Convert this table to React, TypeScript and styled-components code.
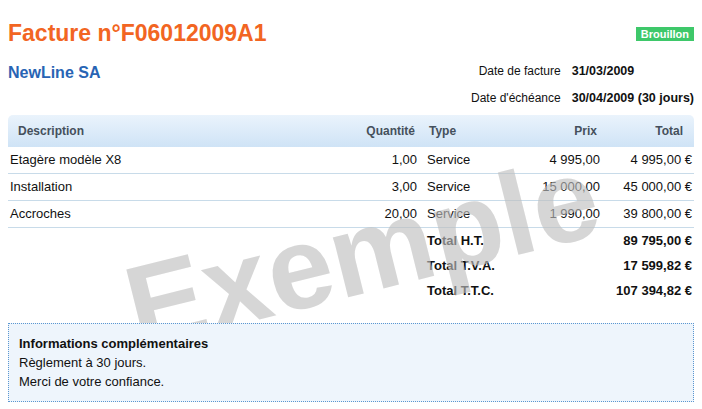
import React from "react";
import styled, { createGlobalStyle } from "styled-components";

const GlobalStyle = createGlobalStyle`
  html, body {
    margin: 0;
    padding: 0;
    background: #ffffff;
  }
  body {
    font-family: "Liberation Sans", Arial, sans-serif;
    font-size: 12px;
    color: #111111;
  }
`;

const Page = styled.div`
  position: relative;
  width: 702px;
  height: 409px;
  box-sizing: border-box;
  padding: 0 8px;
  overflow: hidden;
`;

const TopRow = styled.div`
  display: flex;
  justify-content: space-between;
  align-items: flex-start;
`;

const Title = styled.h1`
  margin: 19px 0 0 0;
  font-size: 23px;
  line-height: 28px;
  font-weight: bold;
  color: #f26522;
`;

const Badge = styled.span`
  margin-top: 27px;
  background: #3ec86a;
  color: #ffffff;
  font-weight: bold;
  font-size: 11px;
  line-height: 14px;
  padding: 0 5px;
`;

const InfoRow = styled.div`
  display: flex;
  justify-content: space-between;
  align-items: flex-start;
`;

const Client = styled.div`
  margin-top: 16px;
  font-size: 16px;
  line-height: 20px;
  font-weight: bold;
  color: #2864b4;
`;

const Dates = styled.div`
  display: grid;
  grid-template-columns: auto auto;
  column-gap: 11px;
  margin-top: 11px;
  line-height: 27px;
`;

const DateLabel = styled.div`
  text-align: right;
`;

const DateValue = styled.div`
  font-weight: bold;
  font-size: 12.5px;
`;

const Table = styled.div`
  margin-top: 3px;
`;

const cols = "347px 70px 95px 80px 94px";

const HeadRow = styled.div`
  display: grid;
  grid-template-columns: ${cols};
  height: 32px;
  line-height: 32px;
  border-radius: 5px 5px 0 0;
  background: linear-gradient(#eaf3fc, #cfe3f6);
  font-weight: bold;
  color: #45505c;
`;

const BodyRow = styled.div`
  display: grid;
  grid-template-columns: ${cols};
  height: 26px;
  line-height: 26px;
  font-size: 13px;
  border-bottom: 1px solid #c8dbe9;
`;

const TotalRow = styled.div`
  display: grid;
  grid-template-columns: ${cols};
  height: 25px;
  line-height: 25px;
  font-size: 13px;
  font-weight: bold;
`;

const Cell = styled.div<{ $align?: "left" | "right"; $pl?: number; $pr?: number; $span?: string }>`
  text-align: ${(p) => p.$align ?? "left"};
  padding-left: ${(p) => p.$pl ?? 0}px;
  padding-right: ${(p) => p.$pr ?? 0}px;
  white-space: nowrap;
  ${(p) => (p.$span ? `grid-column: ${p.$span};` : "")}
`;

const Notes = styled.div`
  position: relative;
  z-index: 2;
  margin-top: 20px;
  background: #eef5fc;
  border: 1px dotted #5b97d1;
  padding: 10px 10px 10px 10px;
  font-size: 13px;
  line-height: 19px;
  color: #111111;
`;

const NotesTitle = styled.div`
  font-weight: bold;
`;

const Watermark = styled.div`
  position: absolute;
  left: 362px;
  top: 252px;
  z-index: 1;
  transform: translate(-50%, -50%) rotate(-14deg);
  font-size: 117px;
  line-height: 1;
  font-weight: bold;
  color: rgba(190, 190, 190, 0.63);
  pointer-events: none;
  white-space: nowrap;
`;

type Line = { desc: string; qty: string; type: string; price: string; total: string };

const lines: Line[] = [
  { desc: "Etagère modèle X8", qty: "1,00", type: "Service", price: "4 995,00", total: "4 995,00 €" },
  { desc: "Installation", qty: "3,00", type: "Service", price: "15 000,00", total: "45 000,00 €" },
  { desc: "Accroches", qty: "20,00", type: "Service", price: "1 990,00", total: "39 800,00 €" },
];

const totals = [
  { label: "Total H.T.", value: "89 795,00 €" },
  { label: "Total T.V.A.", value: "17 599,82 €" },
  { label: "Total T.T.C.", value: "107 394,82 €" },
];

export default function App() {
  return (
    <>
      <GlobalStyle />
      <Page>
        <TopRow>
          <Title>Facture n°F06012009A1</Title>
          <Badge>Brouillon</Badge>
        </TopRow>
        <InfoRow>
          <Client>NewLine SA</Client>
          <Dates>
            <DateLabel>Date de facture</DateLabel>
            <DateValue>31/03/2009</DateValue>
            <DateLabel>Date d'échéance</DateLabel>
            <DateValue>30/04/2009 (30 jours)</DateValue>
          </Dates>
        </InfoRow>
        <Table>
          <HeadRow>
            <Cell $pl={10}>Description</Cell>
            <Cell $align="right" $pr={10}>Quantité</Cell>
            <Cell $pl={4}>Type</Cell>
            <Cell $align="right" $pr={3}>Prix</Cell>
            <Cell $align="right" $pr={11}>Total</Cell>
          </HeadRow>
          {lines.map((l) => (
            <BodyRow key={l.desc}>
              <Cell $pl={2}>{l.desc}</Cell>
              <Cell $align="right" $pr={8}>{l.qty}</Cell>
              <Cell $pl={2}>{l.type}</Cell>
              <Cell $align="right">{l.price}</Cell>
              <Cell $align="right" $pr={2}>{l.total}</Cell>
            </BodyRow>
          ))}
          {totals.map((t) => (
            <TotalRow key={t.label}>
              <Cell $span="3 / 5" $pl={2}>{t.label}</Cell>
              <Cell $align="right" $pr={2}>{t.value}</Cell>
            </TotalRow>
          ))}
        </Table>
        <Notes>
          <NotesTitle>Informations complémentaires</NotesTitle>
          <div>Règlement à 30 jours.</div>
          <div>Merci de votre confiance.</div>
        </Notes>
        <Watermark>Exemple</Watermark>
      </Page>
    </>
  );
}
